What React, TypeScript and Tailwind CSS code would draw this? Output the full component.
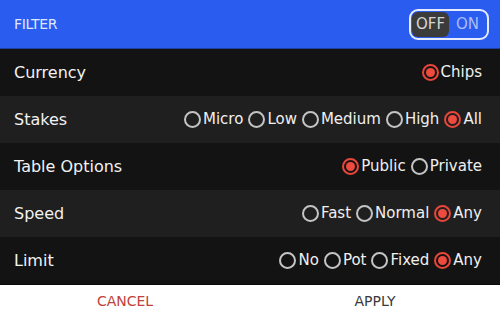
import { useState } from 'react';

type Row = { label: string; options: string[]; selected: string };

const ROWS: Row[] = [
  { label: 'Currency', options: ['Chips'], selected: 'Chips' },
  { label: 'Stakes', options: ['Micro', 'Low', 'Medium', 'High', 'All'], selected: 'All' },
  { label: 'Table Options', options: ['Public', 'Private'], selected: 'Public' },
  { label: 'Speed', options: ['Fast', 'Normal', 'Any'], selected: 'Any' },
  { label: 'Limit', options: ['No', 'Pot', 'Fixed', 'Any'], selected: 'Any' },
];

function Radio({ checked }: { checked: boolean }) {
  if (checked) {
    return (
      <span className="w-[17px] h-[17px] rounded-full border-2 border-[#e8463a] flex items-center justify-center flex-shrink-0">
        <span className="w-[9px] h-[9px] rounded-full bg-[#ee4a3e]" />
      </span>
    );
  }
  return <span className="w-[17px] h-[17px] rounded-full border-2 border-[#c4c4c4] flex-shrink-0" />;
}

export default function App() {
  const [on, setOn] = useState(false);
  const [values, setValues] = useState<Record<string, string>>(
    Object.fromEntries(ROWS.map((r) => [r.label, r.selected]))
  );

  return (
    <div className="w-[500px] h-[317px] flex flex-col bg-white font-['DejaVu_Sans',sans-serif]">
      <div className="h-[49px] bg-[#2a5cf0] border-b border-[#1d3fa8] flex items-center justify-between pl-[14px] pr-[11px]">
        <span className="text-[14px] text-[#dfe7ff] tracking-tight">FILTER</span>
        <button
          onClick={() => setOn(!on)}
          className="w-[80px] h-[31px] rounded-[9px] border-2 border-[#e6ecff] flex items-center p-[1px] text-[15px]"
        >
          <span className={`flex-1 h-full rounded-[6px] flex items-center justify-center ${on ? 'text-[#a9bdf7]' : 'bg-[#3b3b3b] text-[#d6d6d6]'}`}>
            OFF
          </span>
          <span className={`flex-1 h-full rounded-[6px] flex items-center justify-center ${on ? 'bg-[#3b3b3b] text-[#d6d6d6]' : 'text-[#a9bdf7]'}`}>
            ON
          </span>
        </button>
      </div>

      {ROWS.map((row, i) => (
        <div
          key={row.label}
          className={`h-[47px] flex items-center justify-between pl-[14px] pr-[18px] ${i % 2 === 0 ? 'bg-[#131313]' : 'bg-[#1f1f1f]'}`}
        >
          <span className="text-[16px] text-[#f2f2f2]">{row.label}</span>
          <div className="flex items-center gap-[5px]">
            {row.options.map((opt) => (
              <button
                key={opt}
                onClick={() => setValues({ ...values, [row.label]: opt })}
                className="flex items-center gap-[2px] text-[15px] text-[#efefef]"
              >
                <Radio checked={values[row.label] === opt} />
                {opt}
              </button>
            ))}
          </div>
        </div>
      ))}

      <div className="flex-1 flex items-center border-t border-[#0a0a0a]">
        <button className="flex-1 text-center text-[14px] text-[#c0413a]">CANCEL</button>
        <button className="flex-1 text-center text-[14px] text-[#3a3a3a]">APPLY</button>
      </div>
    </div>
  );
}
